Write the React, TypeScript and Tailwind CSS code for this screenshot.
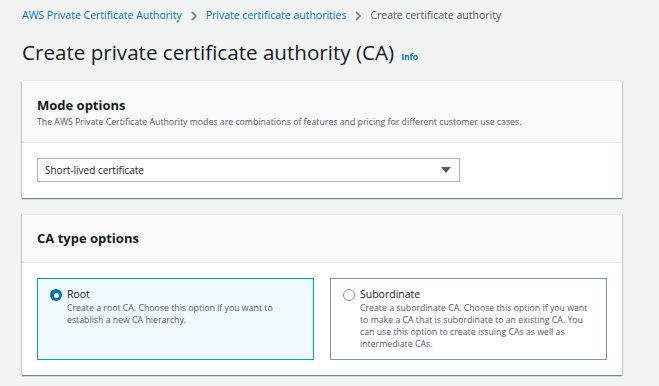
const font = { fontFamily: '"Open Sans", "Liberation Sans", Arial, sans-serif' }

function Chevron() {
  return (
    <svg width="8" height="10" viewBox="0 0 8 10" className="mx-[8px]">
      <path d="M2 1l4 4-4 4" fill="none" stroke="#687078" strokeWidth="1.5" />
    </svg>
  )
}

function Radio({ checked }: { checked?: boolean }) {
  return checked ? (
    <div className="w-[12px] h-[12px] rounded-full bg-[#0073bb] flex items-center justify-center shrink-0">
      <div className="w-[5px] h-[5px] rounded-full bg-white" />
    </div>
  ) : (
    <div className="w-[12px] h-[12px] rounded-full border border-[#879596] bg-white shrink-0" />
  )
}

function Panel({ children }: { children: React.ReactNode }) {
  return (
    <div className="w-[600px] bg-white border-t border-[#eaeded] shadow-[0_1px_1px_0_rgba(0,28,36,0.3),1px_1px_1px_0_rgba(0,28,36,0.15),-1px_1px_1px_0_rgba(0,28,36,0.15)]">
      {children}
    </div>
  )
}

export default function App() {
  return (
    <div className="w-[659px] h-[386px] overflow-hidden bg-[#f2f3f3] pl-[22px] text-[#16191f]" style={font}>
      {/* breadcrumbs */}
      <div className="flex items-center h-[30px] pt-[1px] text-[10.5px]">
        <span className="text-[#0073bb]">AWS Private Certificate Authority</span>
        <Chevron />
        <span className="text-[#0073bb]">Private certificate authorities</span>
        <Chevron />
        <span className="text-[#545b64]">Create certificate authority</span>
      </div>

      {/* title */}
      <div className="flex items-baseline h-[50px] pt-[6px]">
        <h1 className="text-[20.6px] leading-[32px]">Create private certificate authority (CA)</h1>
        <span className="ml-[7px] text-[8.5px] font-bold text-[#0073bb]">Info</span>
      </div>

      {/* mode options */}
      <Panel>
        <div className="bg-[#fafafa] border-b border-[#eaeded] h-[62px] px-[15px] pt-[14px]">
          <div className="text-[13px] font-bold leading-[20px]">Mode options</div>
          <div className="text-[8.75px] text-[#545b64] leading-[14px]">
            The AWS Private Certificate Authority modes are combinations of features and pricing for different customer use cases.
          </div>
        </div>
        <div className="px-[15px] pt-[15px] pb-[16px]">
          <div className="w-[423px] h-[24px] border border-[#aab7b8] flex items-center justify-between pl-[7px] pr-[8px]">
            <span className="text-[10px]">Short-lived certificate</span>
            <svg width="10" height="8" viewBox="0 0 10 8">
              <path d="M0 1h10L5 7z" fill="#545b64" />
            </svg>
          </div>
        </div>
      </Panel>

      <div className="h-[16px]" />

      {/* CA type options */}
      <Panel>
        <div className="bg-[#fafafa] border-b border-[#eaeded] h-[48px] px-[15px] flex items-center">
          <div className="text-[13px] font-bold">CA type options</div>
        </div>
        <div className="px-[15px] pt-[15px] pb-[15px] flex gap-[16px]">
          <div className="w-[277px] h-[82px] bg-[#f1faff] border border-[#00a1c9] pl-[12px] pr-[10px] pt-[8px] flex gap-[5px]">
            <div className="pt-[2px]"><Radio checked /></div>
            <div>
              <div className="text-[10.5px] leading-[15px]">Root</div>
              <div className="text-[8.75px] leading-[12px] text-[#545b64]">
                Create a root CA. Choose this option if you want to establish a new CA hierarchy.
              </div>
            </div>
          </div>
          <div className="w-[277px] h-[82px] bg-white border border-[#879596] pl-[12px] pr-[16px] pt-[8px] flex gap-[5px]">
            <div className="pt-[2px]"><Radio /></div>
            <div>
              <div className="text-[10.5px] leading-[15px]">Subordinate</div>
              <div className="text-[8.75px] leading-[12px] text-[#545b64]">
                Create a subordinate CA. Choose this option if you want to make a CA that is subordinate to an existing CA. You can use this option to create issuing CAs as well as intermediate CAs.
              </div>
            </div>
          </div>
        </div>
      </Panel>
    </div>
  )
}
